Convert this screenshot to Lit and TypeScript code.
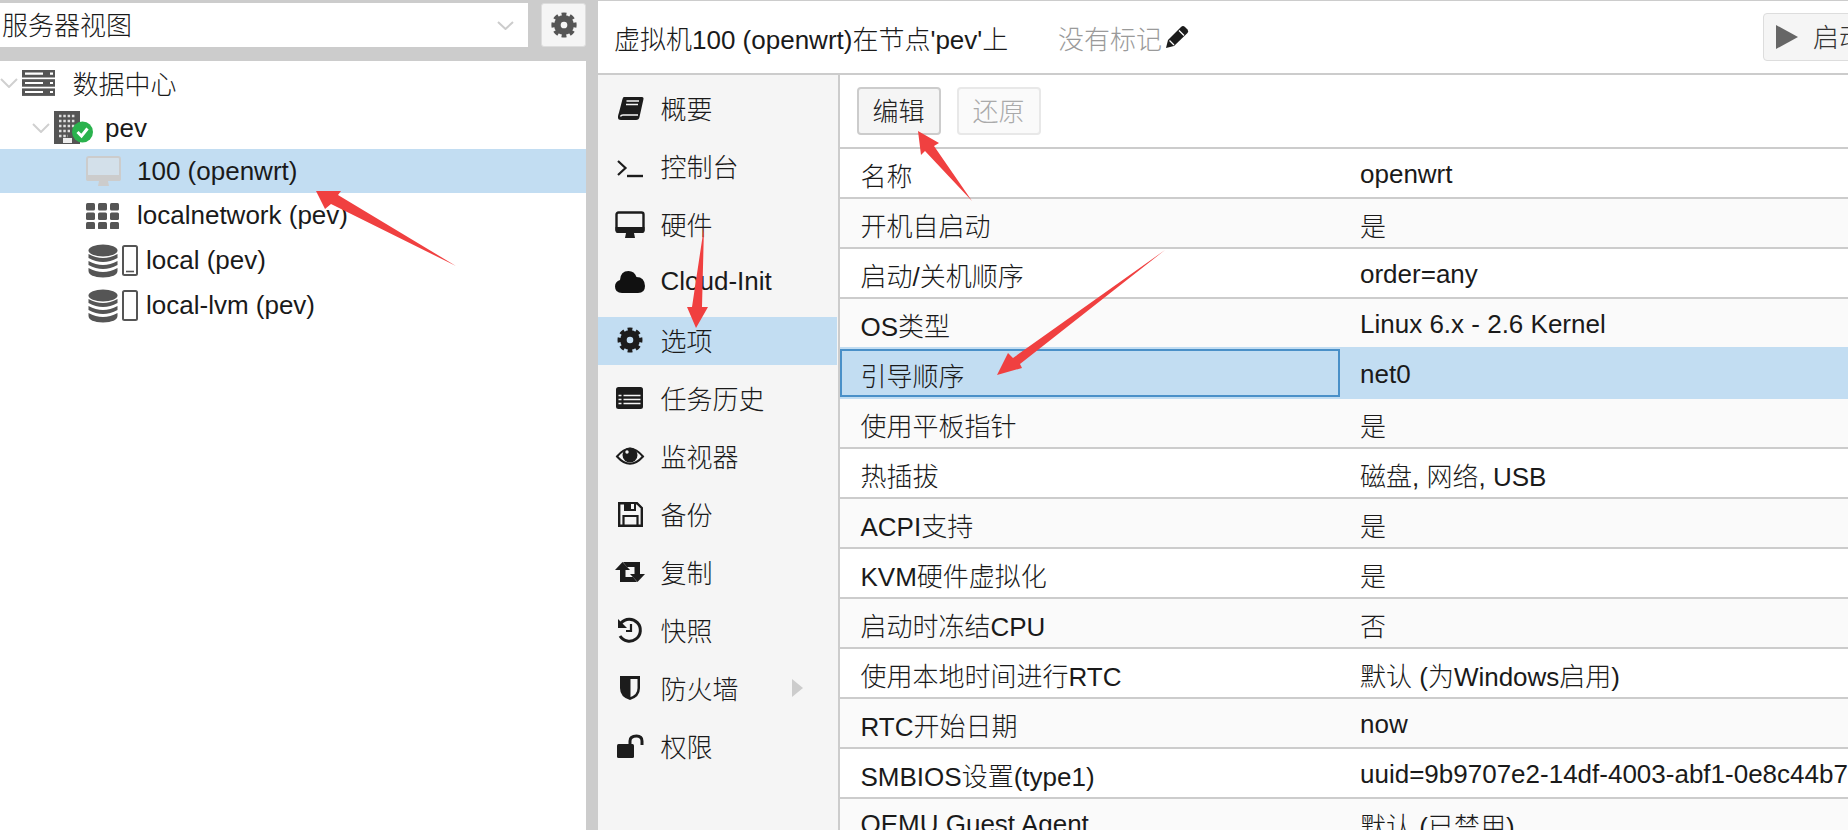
import { LitElement, html, css, svg, nothing } from "lit";
import { customElement } from "lit/decorators.js";

const gear = (cx: number, cy: number, fill: string, r: number) => svg`
  <circle cx=${cx} cy=${cy} r=${r * 0.55} fill="none" stroke=${fill} stroke-width=${r * 0.55}/>
  <circle cx=${cx} cy=${cy} r=${r * 0.88} fill="none" stroke=${fill} stroke-width=${r * 0.32}
    pathLength="48" stroke-dasharray="3.4 2.6" stroke-dashoffset="1.7"/>`;

const menuIcons: Record<string, unknown> = {
  book: svg`<path fill="#1c1c1c" d="M9 4H27Q29 4 28.400 6.500L24.500 24Q24 27 21 27H6Q2.500 27 3 23.500Q3.300 21.500 4 19.500L7.500 6Q8 4 9 4Z"/>
    <path stroke="#f5f5f5" stroke-width="1.500" fill="none" d="M11.500 8H24M11 11.500H23M5.500 23.500Q6 22 8 22H23"/>`,
  term: svg`<path fill="none" stroke="#1c1c1c" stroke-width="2.200" d="M3 10L10.500 17L3 24"/><path stroke="#1c1c1c" stroke-width="2.400" d="M12 25H28"/>`,
  monitor: svg`<rect x="1.500" y="3.500" width="27" height="19" rx="2" fill="#f5f5f5" stroke="#1c1c1c" stroke-width="2.400"/>
    <path fill="#1c1c1c" d="M0.500 18H29.500V22Q29.500 24 27.500 24H2.500Q0.500 24 0.500 22ZM11 24H19L20 29H10Z"/>`,
  cloud: svg`<path fill="#111" d="M7 26Q0 26 0 19.500Q0 14.500 5 13Q5.500 4 13.500 4Q19.500 4 21.500 10Q29.500 10 30 19Q30 26 23 26Z"/>`,
  gear: gear(15, 15, "#1c1c1c", 12),
  list: svg`<rect x="1" y="4" width="27" height="22" rx="2.500" fill="#1c1c1c"/>
    <path stroke="#f5f5f5" stroke-width="1.700" d="M3.500 12.500H6.500M8.500 12.500H25.500M3.500 16.500H6.500M8.500 16.500H25.500M3.500 20.500H6.500M8.500 20.500H25.500"/>`,
  eye: svg`<path fill="none" stroke="#1c1c1c" stroke-width="2" d="M2 15.500Q15 0 28 15.500Q15 30 2 15.500Z"/>
    <circle cx="15" cy="14" r="7.500" fill="#1c1c1c"/><circle cx="12" cy="11" r="1.700" fill="#f5f5f5"/>`,
  save: svg`<path fill="none" stroke="#1c1c1c" stroke-width="2.400" d="M4.200 4.200H22L26.800 9V26.800H4.200Z"/>
    <path fill="#1c1c1c" d="M9 3H21V12H9Z"/><path fill="#f5f5f5" d="M16 5H19V10H16Z"/>
    <path fill="none" stroke="#1c1c1c" stroke-width="2.200" d="M8.500 26V17H22.500V26"/>`,
  retweet: svg`<path fill="#1c1c1c" d="M0 13L7.500 5L15 13H10.500V20H18L22 25H5V13Z"/>
    <path fill="#1c1c1c" d="M30 17L22.500 25L15 17H19.500V10H12L8 5H25V17Z"/>`,
  history: svg`<path fill="none" stroke="#1c1c1c" stroke-width="3" d="M6 8A11 11 0 1 1 5 21"/>
    <path fill="#1c1c1c" d="M3 4V13H12Z"/><path fill="none" stroke="#1c1c1c" stroke-width="2.200" d="M16 9V16H11"/>`,
  shield: svg`<path fill="#1c1c1c" d="M5 3H25V15Q25 24 15 27Q5 24 5 15Z"/><path fill="#f5f5f5" d="M15.500 6H22.500V15Q22.500 21.500 15.500 24Z"/>`,
  unlock: svg`<rect x="2" y="13" width="17" height="14" rx="1.500" fill="#1c1c1c"/>
    <path fill="none" stroke="#1c1c1c" stroke-width="3" d="M15 14V10Q15 5 21.500 5Q27 5 27 10V14"/>`,
};

const menu: [string, string][] = [
  ["book", "概要"], ["term", "控制台"], ["monitor", "硬件"], ["cloud", "Cloud-Init"],
  ["gear", "选项"], ["list", "任务历史"], ["eye", "监视器"], ["save", "备份"],
  ["retweet", "复制"], ["history", "快照"], ["shield", "防火墙"], ["unlock", "权限"],
];

const rows: [string, string][] = [
  ["名称", "openwrt"], ["开机自启动", "是"], ["启动/关机顺序", "order=any"],
  ["OS类型", "Linux 6.x - 2.6 Kernel"], ["引导顺序", "net0"], ["使用平板指针", "是"],
  ["热插拔", "磁盘, 网络, USB"], ["ACPI支持", "是"], ["KVM硬件虚拟化", "是"],
  ["启动时冻结CPU", "否"], ["使用本地时间进行RTC", "默认 (为Windows启用)"], ["RTC开始日期", "now"],
  ["SMBIOS设置(type1)", "uuid=9b9707e2-14df-4003-abf1-0e8c44b7"], ["QEMU Guest Agent", "默认 (已禁用)"],
];

const chevron = html`<svg class="chev" viewBox="0 0 18 10"><path d="M1 1L9 9L17 1" fill="none" stroke="#d0d0d0" stroke-width="2"/></svg>`;

const dbIcon = (underscore: boolean) => html`
  <svg class="db" viewBox="0 0 50 34">
    <g fill="#555">
      <ellipse cx="15" cy="6.500" rx="14.500" ry="6"/>
      <path d="M.5 10Q15 18 29.500 10V14Q15 22 .5 14Z"/>
      <path d="M.5 17Q15 25 29.500 17V21Q15 29 .5 21Z"/>
      <path d="M.5 24Q15 32 29.500 24V27Q29 33 15 33.500Q1 33 .5 27Z"/>
    </g>
    <rect x="35" y="2" width="14" height="29" rx="1.500" fill="none" stroke="#555" stroke-width="2"/>
    ${underscore ? svg`<path d="M38 27.500H46" stroke="#555" stroke-width="1.600"/>` : nothing}
  </svg>`;

@customElement("app-root")
export class AppRoot extends LitElement {
  static styles = css`
    :host { display: block; width: 1848px; height: 830px; overflow: hidden; position: relative; background: #ccc;
      font-family: "Liberation Sans", "Noto Sans CJK SC", sans-serif; font-size: 26px; font-weight: 300; color: #1a1a1a; }
    * { box-sizing: border-box; }
    .page { display: flex; gap: 12px; height: 830px; padding-top: 1px; }
    .left { width: 586px; flex: none; display: flex; flex-direction: column; }
    .topbar { display: flex; justify-content: space-between; height: 60px; padding-top: 2px; }
    .select { width: 528px; height: 44px; background: #fff; display: flex; align-items: center; justify-content: space-between; padding: 0 14px 0 2px; }
    .select span { padding-bottom: 3px; }
    .select svg { width: 17px; height: 9px; }
    .gearbtn { width: 45px; height: 44px; background: #f5f5f5; border: 1px solid #ddd; border-radius: 3px; display: flex; align-items: center; justify-content: center; }
    .gearbtn svg { width: 28px; height: 28px; }
    .tree { flex: 1; background: #fff; }
    .tr { height: 44px; display: flex; align-items: center; white-space: nowrap; }
    .tr.tall { height: 45px; }
    .tr.sel { background: #c2ddf2; }
    .chev { width: 18px; height: 10px; flex: none; }
    .l0 { padding-left: 0; }
    .l0 span { padding-bottom: 2px; }
    .l0 .ico { width: 33px; height: 26px; margin: 0 17.500px 0 4px; }
    .l1 { padding: 2px 0 0 32px; }
    .l1 .ico { width: 40px; height: 34px; margin: 0 11px 0 4px; }
    .vm { padding-left: 86px; }
    .vm .ico { width: 35px; height: 30px; margin-right: 16px; }
    .net { padding-left: 86px; }
    .net .ico { width: 33px; height: 26px; margin-right: 18px; }
    .store { padding-left: 88px; }
    .db { width: 50px; height: 34px; margin-right: 8px; flex: none; }
    .right { flex: 1; display: flex; flex-direction: column; min-width: 0; }
    .head { height: 74px; background: #fff; border-bottom: 2px solid #ccc; display: flex; align-items: center; padding-left: 16px; white-space: nowrap; flex: none; }
    .head .title { width: 444px; flex: none; }
    .tag { color: #9a9a9a; display: flex; align-items: center; }
    .tag svg { width: 24px; height: 24px; margin-left: 3px; }
    .start { position: absolute; left: 1763px; top: 13px; height: 48px; width: 120px; background: #f5f5f5; border: 1px solid #ddd; border-radius: 4px;
      display: flex; align-items: center; padding-left: 12px; color: #333; }
    .start svg { width: 22px; height: 24px; margin-right: 15px; }
    .start span { padding-bottom: 3px; }
    .body { flex: 1; display: flex; background: #fff; min-height: 0; }
    .menu { width: 242px; flex: none; background: #f5f5f5; border-right: 2px solid #ccc; padding-top: 10px; display: flex; flex-direction: column; gap: 10px; }
    .mi { height: 48px; display: flex; align-items: center; padding: 0 0 3px 17px; margin-right: 1px; position: relative; white-space: nowrap; }
    .mi svg.mic { width: 30px; height: 30px; margin-right: 15.500px; flex: none; }
    .mi.sel { background: #c2ddf2; }
    .mi .more { width: 11px; height: 18px; margin-left: 53px; }
    .main { flex: 1; min-width: 0; display: flex; flex-direction: column; }
    .toolbar { height: 74px; flex: none; border-bottom: 2px solid #ccc; padding: 12px 0 0 16.500px; display: flex; gap: 16px; }
    .btn { width: 84px; height: 48px; border: 2px solid #ccc; border-radius: 4px; background: #f5f5f5; display: flex; align-items: center; justify-content: center; padding-bottom: 3px; color: #222; }
    .btn.off { border-color: #e8e8e8; background: #fafafa; color: #aaa; }
    .row { display: flex; height: 50px; padding-top: 2px; border-bottom: 2px solid #ccc; white-space: nowrap; flex: none; background: #fff; }
    .row:first-of-type { height: 52px; padding-top: 4px; }
    .row.odd { background: #fafafa; }
    .row.pre { border-bottom-color: #c2ddf2; }
    .row.sel { background: #c2ddf2; border-bottom-color: #c2ddf2; padding-top: 0; }
    .k { width: 500px; flex: none; padding-left: 20.500px; display: flex; align-items: center; }
    .row.sel .k { box-shadow: inset 0 0 0 2px #4a90c8; padding-top: 2px; }
    .row.sel .v { padding-top: 2px; }
    .v { padding-left: 20px; display: flex; align-items: center; }
    .arrows { position: absolute; left: 0; top: 0; width: 1848px; height: 830px; pointer-events: none; }
  `;

  render() {
    return html`
      <div class="page">
        <div class="left">
          <div class="topbar">
            <div class="select"><span>服务器视图</span>
              <svg viewBox="0 0 17 9"><path d="M1 1L8.500 8L16 1" fill="none" stroke="#ccc" stroke-width="2"/></svg>
            </div>
            <div class="gearbtn"><svg viewBox="0 0 30 30">${gear(15, 15, "#555", 13)}</svg></div>
          </div>
          <div class="tree">
            <div class="tr l0">${chevron}
              <svg class="ico" viewBox="0 0 33 26"><g fill="#555">
                <rect y="0" width="33" height="7.500"/><rect y="9.200" width="33" height="7.500"/><rect y="18.400" width="33" height="7.500"/></g>
                <path stroke="#fff" stroke-width="2.200" d="M3 3.700H21M28 3.700H31M3 13H21M28 13H31M3 22H21M28 22H31"/></svg>
              <span>数据中心</span></div>
            <div class="tr l1">${chevron}
              <svg class="ico" viewBox="0 0 40 34">
                <rect x="0" y="0" width="26" height="33" fill="#555"/>
                <path stroke="#ddd" stroke-width="2.500" stroke-dasharray="2.500 1.800" d="M5 5H22M5 10H22M5 15H22M5 20H16M5 25H14"/>
                <rect x="9" y="27" width="9" height="5" fill="#eee"/>
                <circle cx="28.500" cy="21" r="10.500" fill="#2ab24d"/>
                <path d="M23.500 21L27.500 25L33.500 17.500" fill="none" stroke="#fff" stroke-width="3"/></svg>
              <span>pev</span></div>
            <div class="tr sel vm">
              <svg class="ico" viewBox="0 0 35 30">
                <rect x="1" y="1" width="33" height="23" rx="2" fill="#d3e0ea" stroke="#ccc" stroke-width="2"/>
                <path fill="#ccc" d="M0 19H35V23Q35 25 33 25H2Q0 25 0 23ZM13 25H22L23 30H12Z"/></svg>
              <span>100 (openwrt)</span></div>
            <div class="tr tall net">
              <svg class="ico" viewBox="0 0 33 26"><g fill="#555">
                ${[0, 9.500, 19].map((y) => [0, 12, 24].map((x) => svg`<rect x=${x} y=${y} width="9" height="7.500" rx="1.500"/>`))}
              </g></svg>
              <span>localnetwork (pev)</span></div>
            <div class="tr tall store">${dbIcon(true)}<span>local (pev)</span></div>
            <div class="tr tall store">${dbIcon(false)}<span>local-lvm (pev)</span></div>
          </div>
        </div>
        <div class="right">
          <div class="head">
            <div class="title">虚拟机100 (openwrt)在节点'pev'上</div>
            <div class="tag">没有标记
              <svg viewBox="0 0 24 24"><path fill="#1c1c1c" d="M1 23L3 15L16 2Q18 0 20 2L22.500 4.500Q24 6.500 22.500 8L9 21Z"/>
                <path stroke="#fff" stroke-width="1.300" d="M14 5.500L19 10.500M4.500 15.500L9 20"/></svg>
            </div>
          </div>
          <div class="body">
            <div class="menu">
              ${menu.map(([ic, label]) => html`
                <div class="mi ${ic === "gear" ? "sel" : ""}">
                  <svg class="mic" viewBox="0 0 30 30">${menuIcons[ic]}</svg>
                  <span>${label}</span>
                  ${ic === "shield" ? html`<svg class="more" viewBox="0 0 11 18"><path d="M0 0L11 9L0 18Z" fill="#ccc"/></svg>` : nothing}
                </div>`)}
            </div>
            <div class="main">
              <div class="toolbar">
                <div class="btn">编辑</div>
                <div class="btn off">还原</div>
              </div>
              ${rows.map(([k, v], i) => html`
                <div class="row ${i % 2 ? "odd" : ""} ${i === 4 ? "sel" : ""} ${i === 3 ? "pre" : ""}">
                  <div class="k">${k}</div><div class="v">${v}</div>
                </div>`)}
            </div>
          </div>
        </div>
      </div>
      <div class="start"><svg viewBox="0 0 22 24"><path d="M0 0L22 12L0 24Z" fill="#666"/></svg><span>启动</span></div>
      <svg class="arrows" viewBox="0 0 1848 830">
        <g fill="#f04040">
          <polygon points="316,191 341,191 338,195 456,266 331,204 325,209"/>
          <polygon points="918,131 939,143 934,146 972,201 925,151 921,155"/>
          <polygon points="696,328 708,307 702,307 704,227 692,307 687,307"/>
          <polygon points="997,375 1022,368 1020,364 1165,250 1013,358 1008,353"/>
        </g>
      </svg>
    `;
  }
}
